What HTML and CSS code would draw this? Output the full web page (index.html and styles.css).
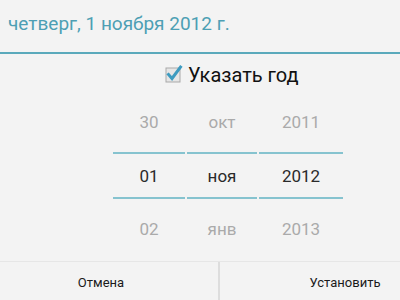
FILE: index.html
```html
<!DOCTYPE html>
<html lang="ru">
<head>
<meta charset="utf-8">
<link rel="stylesheet" href="styles.css">
</head>
<body>
<div class="dialog">
  <div class="header">
    <div class="title">четверг, 1 ноября 2012 г.</div>
  </div>
  <div class="check-row">
    <span class="checkbox">
      <svg width="18" height="20" viewBox="0 0 18 20">
        <rect x="1" y="4" width="14" height="14" fill="#e6e6e6" stroke="#a9a9a9" stroke-width="1"/>
        <path d="M3.5 10.5 L7 14.5 L15.5 3" fill="none" stroke="#3d9bc0" stroke-width="3" stroke-linecap="square"/>
      </svg>
    </span>
    <span class="check-label">Указать год</span>
  </div>
  <div class="picker">
    <div class="col c1">
      <div class="cell dim">30</div>
      <div class="cell sel">01</div>
      <div class="cell dim">02</div>
    </div>
    <div class="col c2">
      <div class="cell dim">окт</div>
      <div class="cell sel">ноя</div>
      <div class="cell dim">янв</div>
    </div>
    <div class="col c3">
      <div class="cell dim">2011</div>
      <div class="cell sel">2012</div>
      <div class="cell dim">2013</div>
    </div>
  </div>
  <div class="buttons">
    <div class="btn left">Отмена</div>
    <div class="btn right">Установить</div>
  </div>
</div>
</body>
</html>
```
FILE: styles.css
```css
html, body {
  margin: 0;
  padding: 0;
  background: #f3f3f3;
}
.dialog {
  width: 400px;
  height: 300px;
  font-family: Roboto, "Noto Sans", sans-serif;
  display: flex;
  flex-direction: column;
  overflow: hidden;
}
.header {
  height: 52px;
  border-bottom: 2px solid #5aa9bb;
  box-sizing: content-box;
  display: flex;
  align-items: center;
  padding-left: 8px;
}
.title {
  font-size: 19px;
  color: #4d9fb4;
  line-height: 24px;
  margin-top: -4px;
}
.check-row {
  height: 44px;
  display: flex;
  align-items: center;
  padding-left: 165px;
}
.checkbox {
  display: flex;
  width: 18px;
  height: 20px;
  margin-top: -4px;
  margin-right: 5px;
}
.check-label {
  font-size: 20px;
  color: #111;
  line-height: 24px;
  margin-top: -2px;
}
.picker {
  display: flex;
  gap: 2px;
  padding-left: 113px;
  height: 163px;
}
.col {
  display: flex;
  flex-direction: column;
}
.c1 { width: 72px; }
.c2 { width: 70px; }
.c3 { width: 84px; }
.cell {
  display: flex;
  align-items: center;
  justify-content: center;
  font-size: 17px;
  box-sizing: border-box;
}
.cell.dim {
  color: #aaaaaa;
}
.cell:first-child {
  height: 54px;
  padding-bottom: 6px;
}
.cell.sel {
  color: #2a2a2a;
  height: 47px;
  border-top: 2px solid #86c3cf;
  border-bottom: 2px solid #86c3cf;
}
.cell:last-child {
  height: 60px;
  padding-bottom: 1px;
}
.buttons {
  border-top: 1px solid #e6e6e6;
  flex: 1;
  display: flex;
}
.btn {
  display: flex;
  align-items: center;
  justify-content: center;
  font-size: 13px;
  color: #1a1a1a;
  padding-top: 3px;
}
.left {
  width: 220px;
  padding-right: 16px;
  box-sizing: border-box;
  border-right: 2px solid #dddddd;
}
.right {
  flex: 1;
  padding-left: 70px;
}
```
